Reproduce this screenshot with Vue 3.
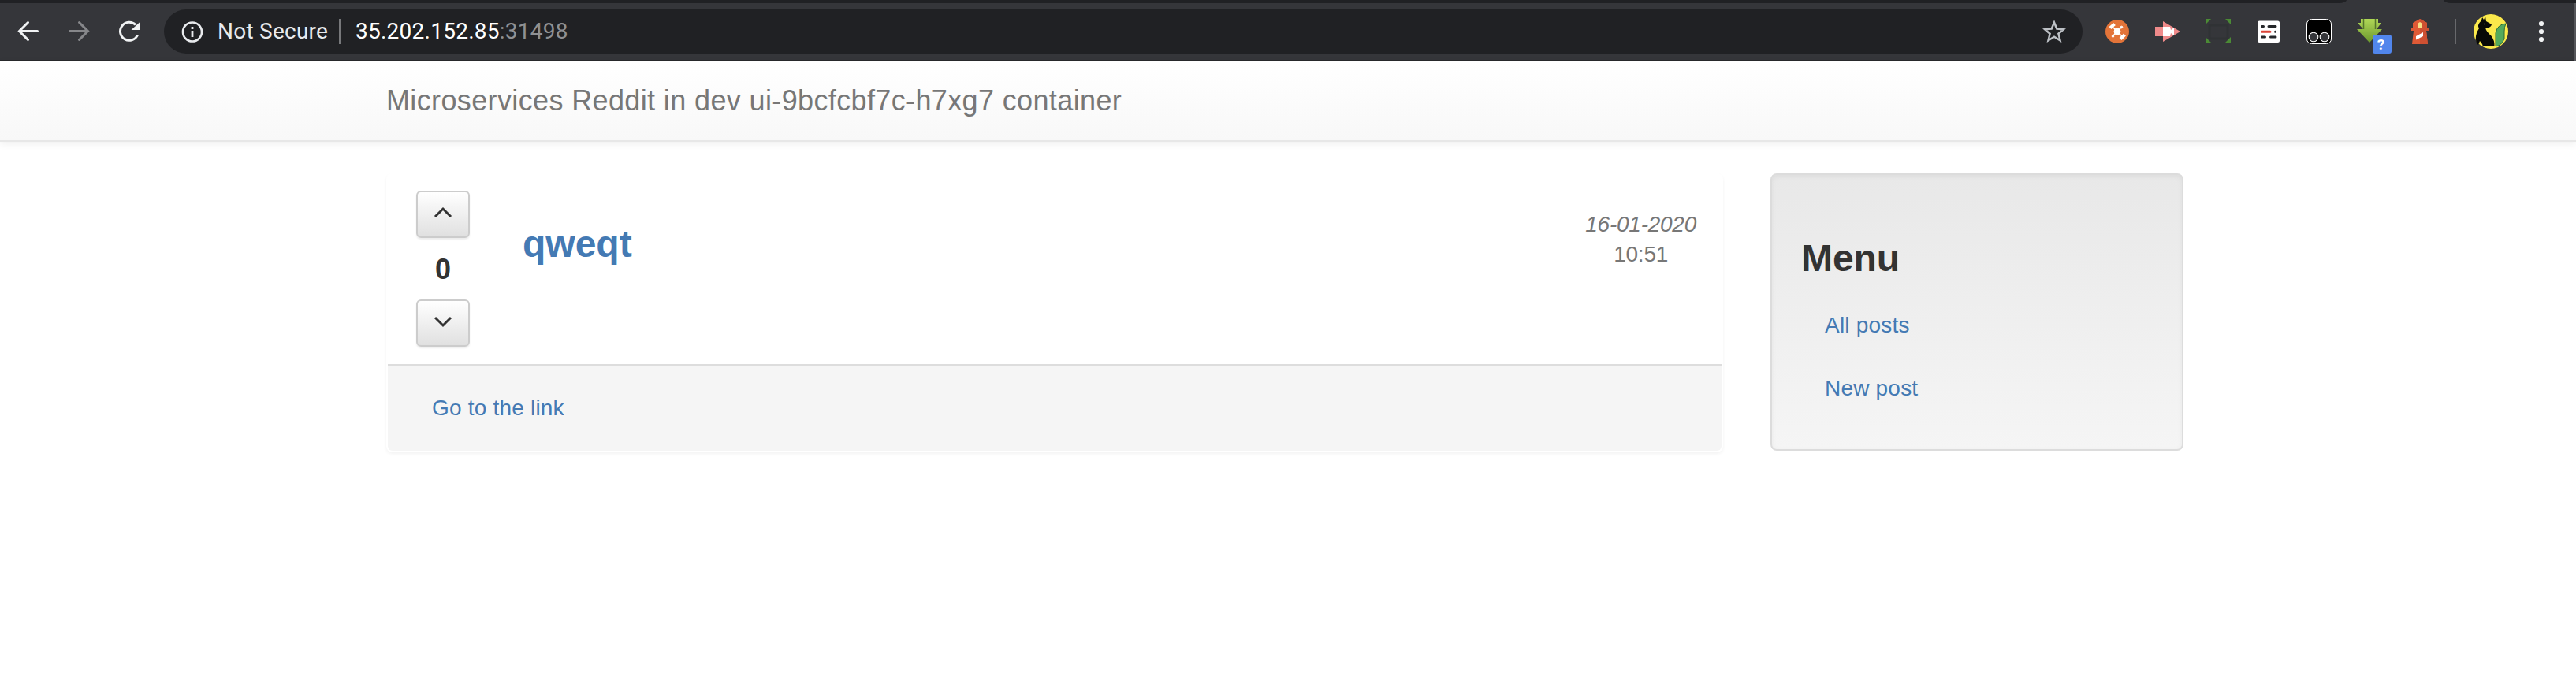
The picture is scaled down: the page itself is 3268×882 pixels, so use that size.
<script setup>
const menu = ['All posts', 'New post']
</script>

<template>
  <div class="page">
    <header class="chrome">
      <div class="tabs"><i class="tab-left"></i><i class="tab-right"></i></div>
      <div class="toolbar">
        <svg class="nav" viewBox="0 0 190 72" width="190" height="72" fill="none" stroke-width="3" stroke-linecap="round">
          <path d="M47.500 35.500H25M35.500 24.500L24.500 35.500L35.500 46.500" stroke="#f1f3f4" />
          <path d="M88.500 35.500H111M100.500 24.500L111.500 35.500L100.500 46.500" stroke="#86878a" />
          <path d="M174.500 40.500A11.500 11.500 0 1 1 172 27.500" stroke="#f1f3f4" stroke-linecap="butt" />
          <path d="M178 23.500V34H166.500Z" fill="#f1f3f4" />
        </svg>
        <div class="omnibox">
          <svg class="info" viewBox="0 0 28 28" width="28" height="28"><circle cx="14" cy="14.500" r="12" fill="none" stroke="#e8eaed" stroke-width="2.600" /><path d="M14 8V11M14 13V21" stroke="#e8eaed" stroke-width="2.800" /></svg>
          <span class="secure">Not Secure</span>
          <i class="sep"></i>
          <span class="host">35.202.152.85</span><span class="port">:31498</span>
          <svg class="star" viewBox="0 0 30 30" width="30" height="30"><path d="M15 3.500L18.300 11.500L27 12.200L20.400 17.800L22.500 26.300L15 21.700L7.500 26.300L9.600 17.800L3 12.200L11.700 11.500Z" fill="none" stroke="#bdc1c6" stroke-width="2.500" /></svg>
        </div>
        <svg class="ext" viewBox="2650 0 616 74" width="616" height="74">
          <circle cx="2686" cy="36" r="15" fill="#e37439" />
          <g stroke="#fff" fill="#fff"><path d="M2680 30L2692 42M2691.500 30.500L2680.500 41.500" stroke-width="1.500" /><path d="M2677 31.500L2682.500 26.500M2690 45.500L2695.500 40" stroke-width="4" /><circle cx="2686" cy="36" r="4" /><circle cx="2691.500" cy="30.500" r="1.300" /><circle cx="2680.500" cy="42" r="1.300" /></g>
          <path d="M2734 30H2744V23L2766 36L2744 49V42H2734Z" fill="#ef8a8a" />
          <path d="M2744 30H2753L2754 34L2758 31V41L2754 38L2753 42H2744Z" fill="#fff" />
          <rect x="2803" y="28" width="23" height="17" fill="none" stroke="#303235" stroke-width="3" />
          <path d="M2798 20H2805L2798 27ZM2823 20H2830V27ZM2798 43L2805 50H2798ZM2830 43V50H2823Z" fill="#4b8a35" />
          <rect x="2864" y="22.500" width="28" height="27.500" rx="2.500" fill="#fff" />
          <g stroke="#25272a" stroke-width="3" stroke-linecap="round"><path d="M2869.500 29.500H2871.500M2878 29.500H2887M2869.500 43H2873.500M2880.500 43H2887M2886.500 36.300H2886.600" /><path d="M2869.500 36.300H2880" stroke="#db4437" /></g>
          <rect x="2926.500" y="20.500" width="31" height="31" rx="6" fill="#000" stroke="#fff" />
          <g fill="#35363a" stroke="#fff" stroke-width="1.100"><circle cx="2935" cy="43" r="5.800" /><circle cx="2949" cy="43" r="5.800" /></g>
          <defs><linearGradient id="download" x2="0" y2="1"><stop stop-color="#b0d857" /><stop offset="1" stop-color="#6c982e" /></linearGradient></defs>
          <path d="M2995 20H3017V25H3021L3015 33H3022L3006 50L2990 33H2998L2991 25H2995Z" fill="url(#download)" />
          <path d="M2998.500 20V33M3013.500 20V33" stroke="#55762c" stroke-width="1.500" />
          <rect x="3010" y="40" width="24" height="24" rx="3" fill="#5186ec" />
          <text x="3020.500" y="58.500" text-anchor="middle" class="badge">?</text>
          <path d="M3061 25L3070 20L3079 25V31H3081V35H3078L3080 52H3060L3062 35H3059V31H3061Z" fill="#df5a36" />
          <path d="M3070 20L3079 25V31H3081V35H3078L3080 52H3070Z" fill="#ce5032" />
          <path d="M3067 31V26L3070 24L3073 26V31Z" fill="#f7df86" /><path d="M3065 42L3074 37V42L3065 46.500Z" fill="#fff" />
          <path d="M3115 20V52" stroke="#68696c" stroke-width="2" />
          <circle cx="3160" cy="36" r="22" fill="#fbe94b" />
          <path d="M3166 55V38Q3168 27 3179 26Q3177 30 3177 36V45Q3174 54 3166 55Z" fill="#54aa5c" stroke="#2a6a36" />
          <path d="M3149 18L3151 21L3153 17L3154 23L3161 27Q3160 32 3153 31Q3154 36 3160 41Q3165 47 3164.500 55H3150L3149 52L3146 48L3144 53Q3140 49 3141 42Q3142 36 3145 32Q3142 28 3148 22Z" fill="#080907" />
          <circle cx="3152" cy="26.500" r=".8" fill="#fff" />
          <g fill="#f1f3f4"><circle cx="3224" cy="26" r="3.100" /><circle cx="3224" cy="36" r="3.100" /><circle cx="3224" cy="46" r="3.100" /></g>
        </svg>
        <i class="edge"></i>
      </div>
    </header>
    <nav class="navbar"><div class="container"><span class="brand">Microservices Reddit in dev ui-9bcfcbf7c-h7xg7 container</span></div></nav>
    <main class="container content">
      <section class="panel">
        <div class="post">
          <div class="votes">
            <button><svg viewBox="0 0 24 16" width="24" height="16"><path d="M2 13L12 3L22 13" /></svg></button>
            <strong class="count">0</strong>
            <button><svg viewBox="0 0 24 16" width="24" height="16"><path d="M2 3L12 13L22 3" /></svg></button>
          </div>
          <a class="title">qweqt</a>
          <div class="date"><em>16-01-2020</em><span>10:51</span></div>
        </div>
        <footer><a class="golink">Go to the link</a></footer>
      </section>
      <aside class="well">
        <h3>Menu</h3>
        <ul><li v-for="m in menu" :key="m"><a>{{ m }}</a></li></ul>
      </aside>
    </main>
  </div>
</template>

<style>
body { margin: 0; background: #fff; }
</style>
<style scoped>
* { box-sizing: border-box; }
.page { height: 882px; overflow: hidden; font: 28px/40px "Liberation Sans", Arial, sans-serif; color: #333; background: #fff; }
.chrome { height: 78px; background: #35363a; border-bottom: 2px solid #28292c; }
.tabs { height: 4px; display: flex; justify-content: space-between; }
.tabs i { background: #202124; height: 4px; }
.tab-left { width: 2977px; border-bottom-right-radius: 10px 4px; }
.tab-right { width: 168px; border-bottom-left-radius: 10px 4px; }
.toolbar { height: 72px; display: flex; align-items: flex-start; }
.nav { margin-right: 18px; flex: none; }
.omnibox { margin-top: 8px; width: 2434px; height: 56px; border-radius: 28px; background: #202124; display: flex; align-items: center; padding: 0 21px 0 22px; font: 28px/56px Roboto, sans-serif; letter-spacing: .25px; white-space: pre; flex: none; }
.info { margin-right: 18px; }
.secure { width: 154px; color: #e8eaed; }
.sep { width: 2px; height: 32px; background: #77787b; margin-right: 19px; }
.host { color: #fff; }
.port { color: #8f9194; }
.star { margin-left: auto; }
.ext { flex: none; height: 74px; margin-left: 8px; }
.edge { width: 2px; height: 74px; background: #55565a; }
.badge { font: bold 19px Roboto, sans-serif; fill: #fff; }
.navbar { height: 102px; background: linear-gradient(#fff, #f8f8f8); border-bottom: 2px solid #e7e7e7; box-shadow: 0 2px 10px rgba(0,0,0,.075); }
.container { width: 2280px; margin-left: 490px; }
.brand { display: inline-block; padding-top: 30px; color: #777; font-size: 36px; line-height: 40px; letter-spacing: .37px; }
.content { display: flex; align-items: flex-start; margin-top: 40px; }
.panel { width: 1696px; height: 354px; border: 2px solid transparent; border-radius: 8px; box-shadow: 0 2px 4px rgba(0,0,0,.05); }
.post { height: 240px; display: flex; padding: 20px 32px 0 36px; }
.votes { width: 68px; display: flex; flex-direction: column; align-items: center; }
button { width: 68px; height: 60px; padding: 0 0 4px; display: flex; align-items: center; justify-content: center; border: 2px solid #ccc; border-radius: 6px; background: linear-gradient(#fff, #e0e0e0); box-shadow: 0 2px 2px rgba(0,0,0,.075); flex: none; }
button svg { fill: none; stroke: #333; stroke-width: 3; }
.count { font-size: 36px; line-height: 80px; height: 78px; }
.title { margin: 40px 0 0 67px; font-size: 48px; line-height: 56px; height: 56px; color: #447ab4; font-weight: bold; }
.date { margin: 24px 0 0 auto; display: flex; flex-direction: column; align-items: center; color: #777; line-height: 38px; letter-spacing: -.25px; }
.panel footer { height: 110px; background: #f5f5f5; border-top: 2px solid #ddd; border-radius: 0 0 6px 6px; padding: 34px 56px; }
a { color: #447ab4; }
.golink, li a { letter-spacing: .2px; }
.well { width: 524px; height: 352px; margin-left: 60px; border: 2px solid #dcdcdc; border-radius: 8px; padding: 0 37px; background: linear-gradient(#e8e8e8, #f5f5f5); box-shadow: inset 0 2px 6px rgba(0,0,0,.05); }
h3 { margin: 79px 0 0; font-size: 48px; line-height: 53px; font-weight: bold; letter-spacing: -.1px; }
ul { list-style: none; margin: 19px 0 0; padding: 0; }
li { height: 80px; padding: 20px 30px; }
</style>
